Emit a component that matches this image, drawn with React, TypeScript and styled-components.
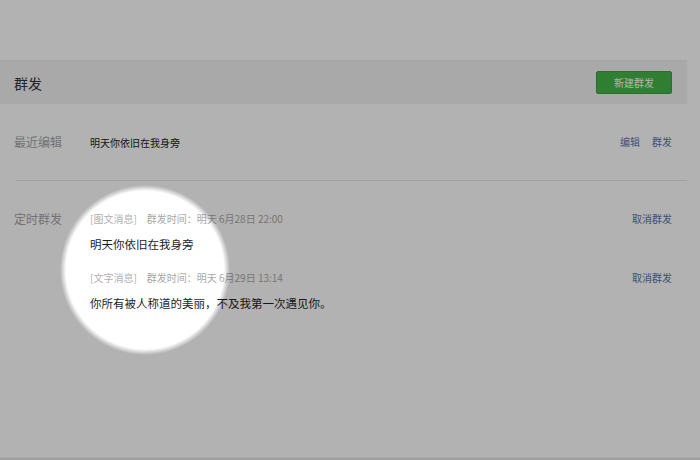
import React from "react"
import styled, { createGlobalStyle } from "styled-components"

const GlobalStyle = createGlobalStyle`
  html, body {
    margin: 0;
    padding: 0;
    background: #ffffff;
  }
  body {
    font-family: "Noto Sans CJK SC", "Noto Sans", "Liberation Sans", sans-serif;
    color: #222222;
  }
`

type Scheduled = {
  kind: string
  time: string
  text: string
}

const scheduled: Scheduled[] = [
  { kind: "[图文消息]", time: "群发时间：明天 6月28日 22:00", text: "明天你依旧在我身旁" },
  { kind: "[文字消息]", time: "群发时间：明天 6月29日 13:14", text: "你所有被人称道的美丽，不及我第一次遇见你。" },
]

export default function App() {
  return (
    <>
      <GlobalStyle />
      <Page>
        <Main>
          <Header>
            <Title>群发</Title>
            <PrimaryButton>新建群发</PrimaryButton>
          </Header>

          <RecentRow>
            <Label>最近编辑</Label>
            <RecentText>明天你依旧在我身旁</RecentText>
            <Actions>
              <Link>编辑</Link>
              <Link>群发</Link>
            </Actions>
          </RecentRow>

          <Divider />

          <ScheduledSection>
            <Label>定时群发</Label>
            <ItemList>
              {scheduled.map((item) => (
                <Item key={item.time}>
                  <ItemBody>
                    <Meta>
                      <Kind>{item.kind}</Kind>
                      <span>{item.time}</span>
                    </Meta>
                    <Content>{item.text}</Content>
                  </ItemBody>
                  <Link>取消群发</Link>
                </Item>
              ))}
            </ItemList>
          </ScheduledSection>
        </Main>
        <Footer />
        <Spotlight />
      </Page>
    </>
  )
}

const Page = styled.div`
  position: relative;
  width: 700px;
  height: 460px;
  display: flex;
  flex-direction: column;
  overflow: hidden;
`
const Main = styled.div`
  width: 687px;
  padding-top: 60px;
  flex: 1;
`
const Header = styled.div`
  height: 44px;
  background: #f2f2f2;
  border-top: 1px solid #ececec;
  box-sizing: border-box;
  padding: 0 15px 0 14px;
  display: flex;
  align-items: center;
  justify-content: space-between;
`
const Title = styled.div`
  font-size: 14px;
  color: #333333;
`
const PrimaryButton = styled.button`
  width: 76px;
  height: 23px;
  border: 1px solid #3d9f42;
  border-radius: 2px;
  background: #44b549;
  color: #ffffff;
  font-family: inherit;
  font-size: 10px;
  padding: 0;
`
const RecentRow = styled.div`
  height: 76px;
  padding: 0 15px 0 14px;
  display: flex;
  align-items: center;
`
const Label = styled.div`
  width: 76px;
  flex-shrink: 0;
  font-size: 12px;
  line-height: 20px;
  color: #a3a3a3;
`
const RecentText = styled.div`
  flex: 1;
  font-size: 10px;
  color: #222222;
`
const Actions = styled.div`
  display: flex;
  gap: 12px;
`
const Link = styled.a`
  font-size: 10px;
  line-height: 20px;
  color: #5a73a8;
  cursor: pointer;
`
const Divider = styled.div`
  margin-left: 16px;
  border-top: 1px solid #e6e6e6;
`
const ScheduledSection = styled.div`
  padding: 28px 15px 0 14px;
  display: flex;
  align-items: flex-start;
`
const ItemList = styled.div`
  flex: 1;
  display: flex;
  flex-direction: column;
  gap: 14px;
`
const Item = styled.div`
  display: flex;
  align-items: flex-start;
  justify-content: space-between;
`
const ItemBody = styled.div`
  display: flex;
  flex-direction: column;
  gap: 5px;
`
const Meta = styled.div`
  font-size: 10px;
  line-height: 20px;
  color: #a8a8a8;
  display: flex;
  gap: 10px;
`
const Kind = styled.span`
  color: #b0b0b0;
`
const Content = styled.div`
  font-size: 11.5px;
  line-height: 20px;
  color: #1e1e1e;
`
const Footer = styled.div`
  height: 2px;
  border-top: 1px solid #f4f4f4;
  background: #e4e4e4;
`
const Spotlight = styled.div`
  position: absolute;
  inset: 0;
  pointer-events: none;
  background: radial-gradient(
    circle at 145px 270px,
    rgba(0, 0, 0, 0) 0,
    rgba(0, 0, 0, 0) 79px,
    rgba(0, 0, 0, 0.3) 85px
  );
`
